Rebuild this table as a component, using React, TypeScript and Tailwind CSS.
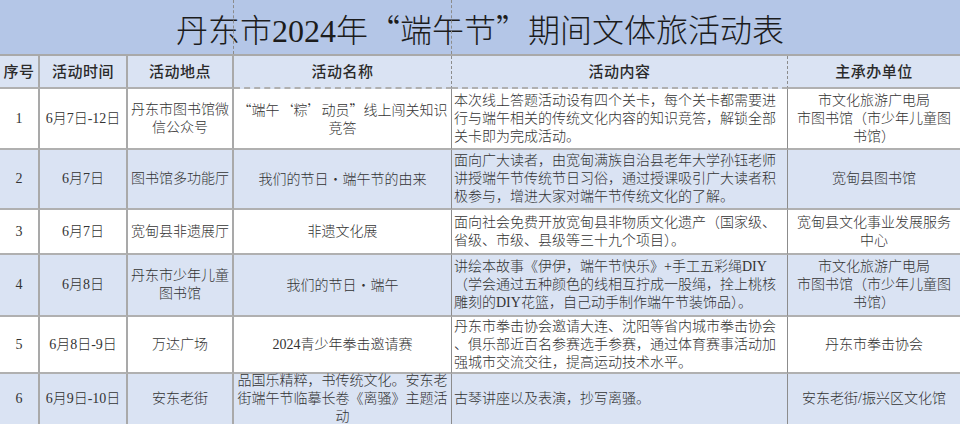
import React from 'react';

type Row = {
  no: string;
  date: string;
  place: string[];
  name: React.ReactNode[];
  content: string[];
  org: string[];
  h: string;
  alt: boolean;
};

const q = (s: string) => <span className="font-['Noto_Sans_CJK_SC']">{s}</span>;

const rows: Row[] = [
  {
    no: '1',
    date: '6月7日-12日',
    place: ['丹东市图书馆微', '信公众号'],
    name: [
      <>
        {q('“')}端午{q('‘')}粽{q('’')}动员{q('”')}线上闯关知识
      </>,
      '竞答',
    ],
    content: [
      '本次线上答题活动设有四个关卡，每个关卡都需要进',
      '行与端午相关的传统文化内容的知识竞答，解锁全部',
      '关卡即为完成活动。',
    ],
    org: ['市文化旅游广电局', '市图书馆（市少年儿童图', '书馆）'],
    h: 'h-[61px]',
    alt: false,
  },
  {
    no: '2',
    date: '6月7日',
    place: ['图书馆多功能厅'],
    name: [<>我们的节日{q('・')}端午节的由来</>],
    content: [
      '面向广大读者，由宽甸满族自治县老年大学孙钰老师',
      '讲授端午节传统节日习俗，通过授课吸引广大读者积',
      '极参与，增进大家对端午节传统文化的了解。',
    ],
    org: ['宽甸县图书馆'],
    h: 'h-[60px]',
    alt: true,
  },
  {
    no: '3',
    date: '6月7日',
    place: ['宽甸县非遗展厅'],
    name: ['非遗文化展'],
    content: ['面向社会免费开放宽甸县非物质文化遗产（国家级、', '省级、市级、县级等三十九个项目）。'],
    org: ['宽甸县文化事业发展服务', '中心'],
    h: 'h-[45px]',
    alt: false,
  },
  {
    no: '4',
    date: '6月8日',
    place: ['丹东市少年儿童', '图书馆'],
    name: [<>我们的节日{q('・')}端午</>],
    content: [
      '讲绘本故事《伊伊，端午节快乐》+手工五彩绳DIY',
      '（学会通过五种颜色的线相互拧成一股绳，拴上桃核',
      '雕刻的DIY花篮，自己动手制作端午节装饰品）。',
    ],
    org: ['市文化旅游广电局', '市图书馆（市少年儿童图', '书馆）'],
    h: 'h-[62px]',
    alt: true,
  },
  {
    no: '5',
    date: '6月8日-9日',
    place: ['万达广场'],
    name: ['2024青少年拳击邀请赛'],
    content: [
      '丹东市拳击协会邀请大连、沈阳等省内城市拳击协会',
      '、俱乐部近百名参赛选手参赛，通过体育赛事活动加',
      '强城市交流交往，提高运动技术水平。',
    ],
    org: ['丹东市拳击协会'],
    h: 'h-[57px]',
    alt: false,
  },
  {
    no: '6',
    date: '6月9日-10日',
    place: ['安东老街'],
    name: ['品国乐精粹，书传统文化。安东老', '街端午节临摹长卷《离骚》主题活', '动'],
    content: ['古琴讲座以及表演，抄写离骚。'],
    org: ['安东老街/振兴区文化馆'],
    h: 'h-[52px]',
    alt: true,
  },
];

const solid = 'border-r-2 border-[#a9a9a9]';
const dashed = 'border-r border-dashed border-[#8c8c8c]';

function Cell({
  lines,
  border,
  h,
  bg,
  left,
}: {
  lines: React.ReactNode[];
  border: string;
  h: string;
  bg: string;
  left?: boolean;
}) {
  return (
    <div
      className={`${h} ${bg} flex flex-col justify-center border-b-2 border-b-[#b0b0b0] border-solid ${border} ${
        left ? 'items-start pl-[2px]' : 'items-center text-center'
      } whitespace-nowrap`}
    >
      {lines.map((l, i) => (
        <div key={i}>{l}</div>
      ))}
    </div>
  );
}

export default function App() {
  const headers = ['序号', '活动时间', '活动地点', '活动名称', '活动内容', '主承办单位'];
  const borders = [solid, solid, solid, dashed, dashed, ''];

  return (
    <div className="h-[424px] w-[960px] overflow-hidden bg-white font-['Liberation_Serif','Noto_Sans_CJK_SC',serif] text-[#333]">
      <div className="relative flex h-[56px] items-center justify-center border-b-2 border-[#a9a9a9] bg-[#b4c6e7] pt-[4px] text-[32px] font-light text-[#1c1c1c]">
        <span>
          丹东市2024年{q('“')}端午节{q('”')}期间文体旅活动表
        </span>
        <span className="absolute left-[233px] top-0 h-full border-l border-dashed border-[#8c8c8c]" />
        <span className="absolute left-[451px] top-0 h-full border-l border-dashed border-[#8c8c8c]" />
      </div>

      <div className="grid grid-cols-[40px_88px_106px_218px_336px_172px] text-[14px] font-light leading-[18px]">
        {headers.map((h, i) => (
          <div
            key={h}
            className={`flex h-[33px] items-center justify-center border-b-2 border-b-[#b0b0b0] bg-[#dae3f3] text-[15px] font-medium tracking-[0.5px] text-[#2a2a2a] ${borders[i]}`}
          >
            {h}
          </div>
        ))}

        {rows.map((r) => {
          const bg = r.alt ? 'bg-[#dae3f3]' : 'bg-white';
          return (
            <React.Fragment key={r.no}>
              <Cell lines={[r.no]} border={solid} h={r.h} bg={bg} />
              <Cell lines={[r.date]} border={solid} h={r.h} bg={bg} />
              <Cell lines={r.place} border={solid} h={r.h} bg={bg} />
              <Cell lines={r.name} border={dashed} h={r.h} bg={bg} />
              <Cell lines={r.content} border={dashed} h={r.h} bg={bg} left />
              <Cell lines={r.org} border="" h={r.h} bg={bg} />
            </React.Fragment>
          );
        })}
      </div>
    </div>
  );
}
